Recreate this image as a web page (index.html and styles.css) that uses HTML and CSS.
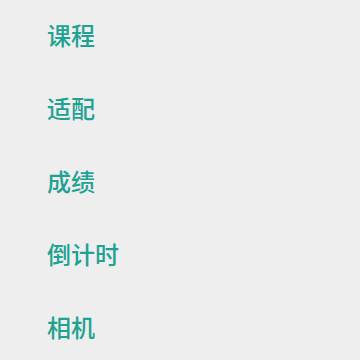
FILE: index.html
```html
<!DOCTYPE html>
<html lang="zh">
<head>
  <meta charset="UTF-8">
  <title>菜单</title>
  <link rel="stylesheet" href="styles.css">
</head>
<body>
  <ul class="menu">
    <li class="menu-item">课程</li>
    <li class="menu-item">适配</li>
    <li class="menu-item">成绩</li>
    <li class="menu-item">倒计时</li>
    <li class="menu-item">相机</li>
  </ul>
</body>
</html>
```

FILE: styles.css
```css
body { margin: 0; background: #eeeeee; font-family: "Noto Sans CJK SC", "Noto Sans", sans-serif; }
.menu { list-style: none; margin: -2px 0 0 0; padding: 0 0 0 47px; }
.menu-item { height: 73px; line-height: 73px; font-size: 24px; font-weight: 500; color: #20a292; }
```
